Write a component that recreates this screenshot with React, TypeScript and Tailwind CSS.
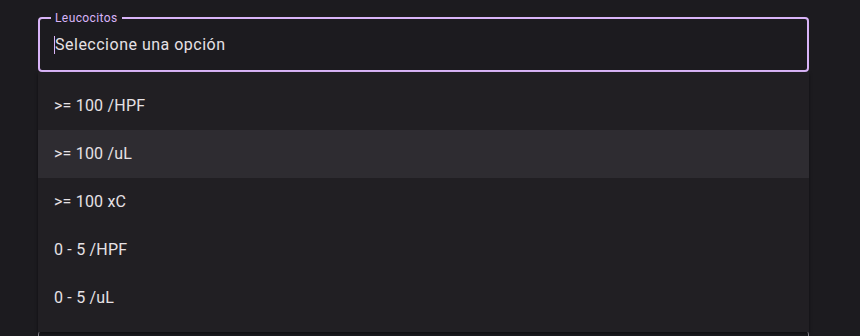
import { useState } from "react";

const options = [">= 100 /HPF", ">= 100 /uL", ">= 100 xC", "0 - 5 /HPF", "0 - 5 /uL"];

export default function App() {
    const [hovered, setHovered] = useState(1);

    return (
        <div className="h-screen overflow-hidden bg-[#1c1b1f] pl-[38px] pt-[17px] font-['Roboto',sans-serif]">
            <div className="relative w-[771px]">
                {/* outlined select */}
                <div className="relative h-[55px] rounded-[4px] border-2 border-[#d9b4f8] flex items-center pl-[14px]">
                    <span className="absolute -top-[9px] left-[11px] bg-[#1c1b1f] px-[4px] text-xs leading-4 tracking-[0.4px] text-[#d9b4f8]">
                        Leucocitos
                    </span>
                    <span className="w-px h-[18px] bg-[#d9b4f8]" />
                    <span className="text-base text-[#e6e1e5] tracking-[0.5px]">Seleccione una opción</span>
                </div>

                {/* next field, mostly hidden under the menu */}
                <div className="mt-[258px] h-[56px] rounded-[4px] border border-[#938f99]" />

                {/* dropdown menu */}
                <ul className="absolute left-0 top-[55px] w-full bg-[#211f23] py-[10px] shadow-[0_2px_3px_rgba(0,0,0,0.5)]">
                    {options.map((opt, i) => (
                        <li
                            key={opt}
                            onMouseEnter={() => setHovered(i)}
                            className={
                                "h-12 flex items-center px-4 text-base tracking-[0.2px] text-[#e6e1e5] cursor-pointer " +
                                (hovered === i ? "bg-[#2e2c31]" : "")
                            }
                        >
                            {opt}
                        </li>
                    ))}
                </ul>
            </div>
        </div>
    );
}
